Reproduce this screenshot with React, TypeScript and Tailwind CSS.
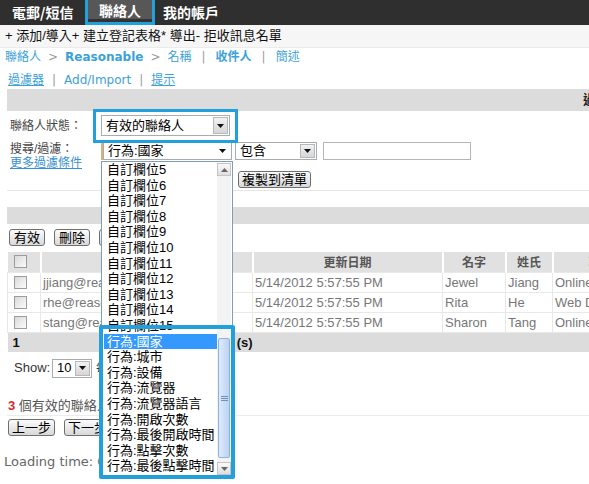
import React from 'react';

const VERDANA = "font-['DejaVu_Sans','Noto_Sans_CJK_TC',sans-serif]";

const listItems = [
  '自訂欄位5',
  '自訂欄位6',
  '自訂欄位7',
  '自訂欄位8',
  '自訂欄位9',
  '自訂欄位10',
  '自訂欄位11',
  '自訂欄位12',
  '自訂欄位13',
  '自訂欄位14',
  '自訂欄位15',
  '行為:國家',
  '行為:城市',
  '行為:設備',
  '行為:流覽器',
  '行為:流覽器語言',
  '行為:開啟次數',
  '行為:最後開啟時間',
  '行為:點擊次數',
  '行為:最後點擊時間',
];

const rows = [
  { email: 'jjiang@reasonable.com.tw', first: 'Jewel', last: 'Jiang', title: 'Online Marketing' },
  { email: 'rhe@reasonable.com.tw', first: 'Rita', last: 'He', title: 'Web Designer' },
  { email: 'stang@reasonable.com.tw', first: 'Sharon', last: 'Tang', title: 'Online Sales' },
];

function DownArrow() {
  return (
    <svg width="7" height="4" viewBox="0 0 7 4">
      <path d="M0 0h7L3.5 4z" fill="#111" />
    </svg>
  );
}

function Select({ value, className = '', boxed = true }: { value: string; className?: string; boxed?: boolean }) {
  return (
    <div className={`flex items-stretch border border-[#a5acb2] bg-white text-[13px] text-black ${className}`}>
      <span className="flex flex-1 items-center overflow-hidden whitespace-nowrap pl-[4px]">{value}</span>
      <span
        className={`m-[1px] flex w-[15px] items-center justify-center ${
          boxed ? 'border border-[#b8b8b8] bg-linear-to-b from-[#f2f2f2] to-[#d6d6d6]' : 'bg-white'
        }`}
      >
        <DownArrow />
      </span>
    </div>
  );
}

function Btn({ children, className = '' }: { children: React.ReactNode; className?: string }) {
  return (
    <span
      className={`inline-flex h-[17px] items-center rounded-[3px] border border-[#6f6f6f] bg-linear-to-b from-[#fcfcfc] to-[#d8d8d8] px-[4px] text-[13px] leading-none whitespace-nowrap text-black ${className}`}
    >
      {children}
    </span>
  );
}

function Check() {
  return <span className="block h-[13px] w-[13px] border border-[#9c9c9c] bg-linear-to-br from-[#d9d9d9] to-[#fbfbfb]" />;
}

const td = 'border border-[#e8e8e8] p-0 pl-[2px] leading-[19px]';

export default function App() {
  return (
    <div className="relative h-[484px] w-[589px] overflow-hidden bg-white font-['Liberation_Sans','Noto_Sans_CJK_TC',sans-serif] text-[13px]">
      {/* top nav */}
      <div className="flex h-[25px] items-stretch bg-[#2f2f2f] font-['Noto_Sans_CJK_TC',sans-serif] text-[14px] font-bold text-white">
        <div className="flex w-[85px] items-center pl-[12px]">電郵/短信</div>
        <div className="flex w-[70px] items-center justify-center border-x-[3px] border-b-[3px] border-[#22a0db] bg-[#575757] pb-[2px] shadow-[inset_0_-3px_0_#333]">
          聯絡人
        </div>
        <div className="flex items-center pl-[8px]">我的帳戶</div>
      </div>

      {/* toolbar */}
      <div className="flex h-[23px] items-center border-b border-[#ebebeb] bg-[#f6f6f6] pl-[5px] text-[13px] text-[#111]">
        + 添加/導入+ 建立登記表格* 導出- 拒收訊息名單
      </div>

      {/* breadcrumb */}
      <div className={`flex h-[18px] items-center gap-[7px] pl-[5px] text-[12px] text-[#3ba1d9] ${VERDANA}`}>
        <span>聯絡人</span>
        <span className="text-[#9a9a9a]">&gt;</span>
        <span className="font-bold">Reasonable</span>
        <span className="text-[#9a9a9a]">&gt;</span>
        <span>名稱</span>
        <span className="px-[3px] text-[#9a9a9a]">|</span>
        <span className="font-bold">收件人</span>
        <span className="px-[3px] text-[#9a9a9a]">|</span>
        <span>簡述</span>
      </div>

      {/* filter links */}
      <div className={`flex h-[23px] items-center gap-[8px] pt-[5px] pl-[8px] text-[12px] text-[#3ba1d9] ${VERDANA}`}>
        <span className="underline">過濾器</span>
        <span className="text-[#9a9a9a]">|</span>
        <span>Add/Import</span>
        <span className="text-[#9a9a9a]">|</span>
        <span className="underline">提示</span>
      </div>

      {/* filter header bar */}
      <div className="ml-[7px] flex h-[22px] items-center justify-end bg-[#dcdcdc]">
        <span className="mr-[-33px] text-[13px] font-bold text-[#222]">過濾器</span>
      </div>

      {/* filter form */}
      <div className="ml-[7px] h-[80px] border-b border-[#e6e6e6] pt-[4px] pl-[3px] text-[#444]">
        <div className="flex h-[21px] items-center">
          <span className="w-[91px] text-[12px]">聯絡人狀態：</span>
          <Select value="有效的聯絡人" className="h-[21px] w-[129px]" />
        </div>
        <div className="mt-[6px] flex">
          <div className="flex w-[91px] flex-col text-[12px] leading-[14px]">
            <span>搜尋/過濾：</span>
            <span className="text-[#3a8fd0] underline">更多過濾條件</span>
          </div>
          <div className="flex flex-col">
            <div className="flex items-center">
              <div className="h-[18px] w-[131px] border-l-2 border-[#d9b27a]">
                <Select value="行為:國家" className="h-[18px] w-[129px]" boxed={false} />
              </div>
              <Select value="包含" className="ml-[3px] h-[18px] w-[82px]" />
              <div className="ml-[6px] h-[18px] w-[148px] border border-[#b5b5b5] bg-white" />
            </div>
            <Btn className="mt-[11px] ml-[137px] w-[73px] justify-center">複製到清單</Btn>
          </div>
        </div>
      </div>

      {/* list header bar */}
      <div className="mt-[16px] ml-[7px] h-[17px] bg-[#dcdcdc]" />

      {/* action buttons */}
      <div className="mt-[5px] flex items-center gap-[9px] pl-[9px]">
        <Btn>有效</Btn>
        <Btn>刪除</Btn>
        <Btn>加到清單</Btn>
      </div>

      {/* contacts table */}
      <table className="mt-[6px] ml-[7px] w-[640px] table-fixed border-collapse text-[13px]">
        <colgroup>
          <col className="w-[33px]" />
          <col className="w-[212px]" />
          <col className="w-[190px]" />
          <col className="w-[63px]" />
          <col className="w-[47px]" />
          <col className="w-[95px]" />
        </colgroup>
        <thead>
          <tr className="h-[20px] bg-[#e1e1e1] font-['Noto_Sans_CJK_TC',sans-serif] text-[12px] font-bold text-[#555]">
            <th className="border-r-2 border-white p-0 pl-[6px]">
              <Check />
            </th>
            <th className="border-r-2 border-white p-0 leading-[18px]">電郵</th>
            <th className="border-r-2 border-white p-0 leading-[18px]">更新日期</th>
            <th className="border-r-2 border-white p-0 leading-[18px]">名字</th>
            <th className="border-r-2 border-white p-0 leading-[18px]">姓氏</th>
            <th className="p-0 leading-[18px]">職稱</th>
          </tr>
        </thead>
        <tbody>
          {rows.map((r) => (
            <tr key={r.email} className="h-[20px] text-[#777]">
              <td className="border border-[#e8e8e8] p-0 pl-[6px]">
                <Check />
              </td>
              <td className={`${td} truncate`}>{r.email}</td>
              <td className={td}>5/14/2012 5:57:55 PM</td>
              <td className={td}>{r.first}</td>
              <td className={td}>{r.last}</td>
              <td className={`${td} truncate`}>{r.title}</td>
            </tr>
          ))}
          <tr className="h-[20px] bg-[#dcdcdc] font-bold text-[#111]">
            <td colSpan={6} className="p-0 pl-[5px] leading-[19px]">
              1<span className="ml-[217px]">(s)</span>
            </td>
          </tr>
        </tbody>
      </table>

      {/* paging */}
      <div className="mt-[7px] flex h-[18px] items-center pl-[14px] text-[13px] text-[#333]">
        <span className="w-[38px]">Show:</span>
        <Select value="10" className="h-[19px] w-[40px]" />
        <span className="ml-[4px]">每頁</span>
      </div>

      <div className="mt-[22px] h-[14px] pl-[8px] text-[13px] leading-[14px] text-[#555]">
        <span className="font-bold text-[#d32b2b]">3</span> 個有效的聯絡人
      </div>
      <div className="mt-[2px] ml-[7px] border-t border-[#ececec]" />
      <div className="mt-[3px] flex items-center gap-[9px] pl-[8px]">
        <Btn className="w-[47px] justify-center">上一步</Btn>
        <Btn className="w-[47px] justify-center">下一步</Btn>
      </div>

      <div className={`mt-[19px] h-[14px] pl-[4px] text-[13px] leading-[14px] text-[#666] ${VERDANA}`}>
        Loading time: 0.125 sec
      </div>

      {/* open dropdown list */}
      <div className="absolute top-[161px] left-[101px] h-[316px] w-[132px] border border-[#7f9db9] bg-white font-['Liberation_Sans','Noto_Sans_CJK_TC',sans-serif]">
        <div className="pr-[15px] pl-[2px]">
          {listItems.map((it) => (
            <div
              key={it}
              className={`h-[15.6px] pl-[3px] text-[13px] leading-[15.6px] whitespace-nowrap ${
                it === '行為:國家' ? 'bg-[#3399ff] text-white' : 'text-black'
              }`}
            >
              {it}
            </div>
          ))}
        </div>
        <div className="absolute top-[1px] right-[1px] bottom-[1px] w-[14px] bg-[#f3f3f3]">
          <div className="flex h-[13px] items-center justify-center border border-[#c4c4c4] bg-linear-to-b from-[#fafafa] to-[#dedede]">
            <svg width="7" height="4" viewBox="0 0 7 4">
              <path d="M0 4h7L3.5 0z" fill="#666" />
            </svg>
          </div>
          <div className="absolute top-[175px] right-[1px] left-[1px] flex h-[120px] items-center justify-center rounded-[2px] border border-[#8fb2dc] bg-linear-to-r from-[#dfeafb] to-[#bcd3f2]">
            <svg width="7" height="5" viewBox="0 0 7 5">
              <path d="M0 0.5h7M0 2.5h7M0 4.5h7" stroke="#6d8fc0" strokeWidth="1" />
            </svg>
          </div>
          <div className="absolute right-0 bottom-0 left-0 flex h-[13px] items-center justify-center border border-[#c4c4c4] bg-linear-to-b from-[#fafafa] to-[#dedede]">
            <svg width="7" height="4" viewBox="0 0 7 4">
              <path d="M0 0h7L3.5 4z" fill="#666" />
            </svg>
          </div>
        </div>
      </div>

      {/* highlight boxes */}
      <div className="absolute top-[109px] left-[93px] h-[34px] w-[145px] border-[3px] border-[#22a0db]" />
      <div className="absolute top-[325px] left-[99px] h-[154px] w-[136px] rounded-[2px] border-[4px] border-[#22a0db]" />
    </div>
  );
}
